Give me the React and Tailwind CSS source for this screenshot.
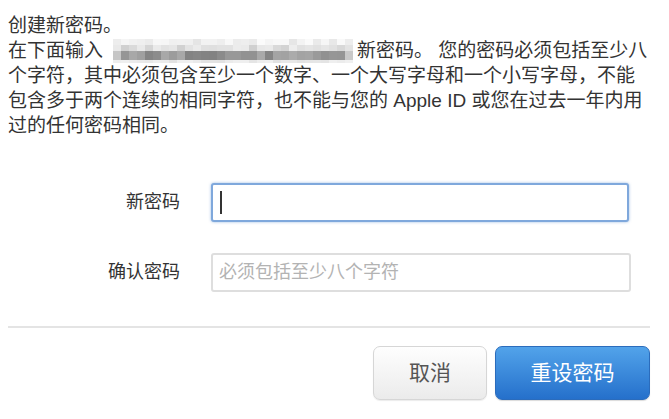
import React from "react";

function Blur() {
  const cols = 30;
  const rnd = (i) => {
    const x = Math.sin(i * 12.9898 + 78.233) * 43758.5453;
    return x - Math.floor(x);
  };
  const rows = [
    { y: 0, h: 6, base: 240, spread: 22 },
    { y: 6, h: 6, base: 222, spread: 30 },
    { y: 12, h: 9, base: 150, spread: 44 },
    { y: 21, h: 3, base: 232, spread: 16 },
  ];
  const rects = [];
  rows.forEach((r, ri) => {
    for (let c = 0; c < cols; c++) {
      let v = r.base + Math.round((rnd(ri * 100 + c) - 0.5) * r.spread);
      if (c === 0 || c === cols - 1) v = Math.round((v + 240) / 2);
      v = Math.max(0, Math.min(255, v));
      rects.push(
        <rect key={ri + "-" + c} x={c * 8} y={r.y} width={8} height={r.h} fill={`rgb(${v},${v},${v})`} />
      );
    }
  });
  return (
    <svg width="240" height="24" viewBox="0 0 240 24" className="inline-block align-[-6px] ml-[10px] mr-[4px]">
      {rects}
    </svg>
  );
}

export default function App() {
  return (
    <div
      className="w-[669px] h-[419px] bg-white text-[#333] overflow-hidden"
      style={{ fontFamily: '"Liberation Sans", "Noto Sans CJK SC", sans-serif' }}
    >
      <div className="pt-[13px] pl-[8px] text-[19px] leading-[25px] whitespace-nowrap">
        <div>创建新密码。</div>
        <div>
          在下面输入
          <Blur />
          新密码。 您的密码必须包括至少八
        </div>
        <div>个字符，其中必须包含至少一个数字、一个大写字母和一个小写字母，不能</div>
        <div>包含多于两个连续的相同字符，也不能与您的 Apple ID 或您在过去一年内用</div>
        <div>过的任何密码相同。</div>
      </div>

      <div className="mt-[45px] flex flex-col gap-[31px]">
        <div className="flex items-center">
          <div className="w-[180px] text-right text-[18px] text-[#333]">新密码</div>
          <div className="ml-[31px] w-[418px] h-[39px] rounded-[3px] border-2 border-[#7fa8dc] bg-white shadow-[0_0_3px_rgba(70,130,200,0.55)] flex items-center pl-[7px]">
            <div className="w-[2px] h-[23px] bg-[#333]" />
          </div>
        </div>
        <div className="flex items-center">
          <div className="w-[180px] text-right text-[18px] text-[#333]">确认密码</div>
          <div className="ml-[31px] w-[420px] h-[39px] rounded-[3px] border-2 border-[#dedede] bg-white flex items-center pl-[6px] text-[18px] text-[#b3b3b3]">
            必须包括至少八个字符
          </div>
        </div>
      </div>

      <div className="mt-[34px] ml-[8px] w-[642px] h-[2px] bg-[#e4e4e4]" />

      <div className="mt-[18px] flex justify-end gap-[8px] pr-[19px]">
        <button className="w-[114px] h-[54px] rounded-[7px] border border-[#d6d6d6] bg-gradient-to-b from-[#fefefe] to-[#ebebeb] text-[21px] text-[#555] shadow-[0_1px_1px_rgba(0,0,0,0.08)]">
          取消
        </button>
        <button className="w-[155px] h-[54px] rounded-[7px] border border-[#2b6cbc] bg-gradient-to-b from-[#52a3ea] to-[#2570cb] text-[21px] text-white shadow-[0_1px_1px_rgba(0,0,0,0.15)]">
          重设密码
        </button>
      </div>
    </div>
  );
}
